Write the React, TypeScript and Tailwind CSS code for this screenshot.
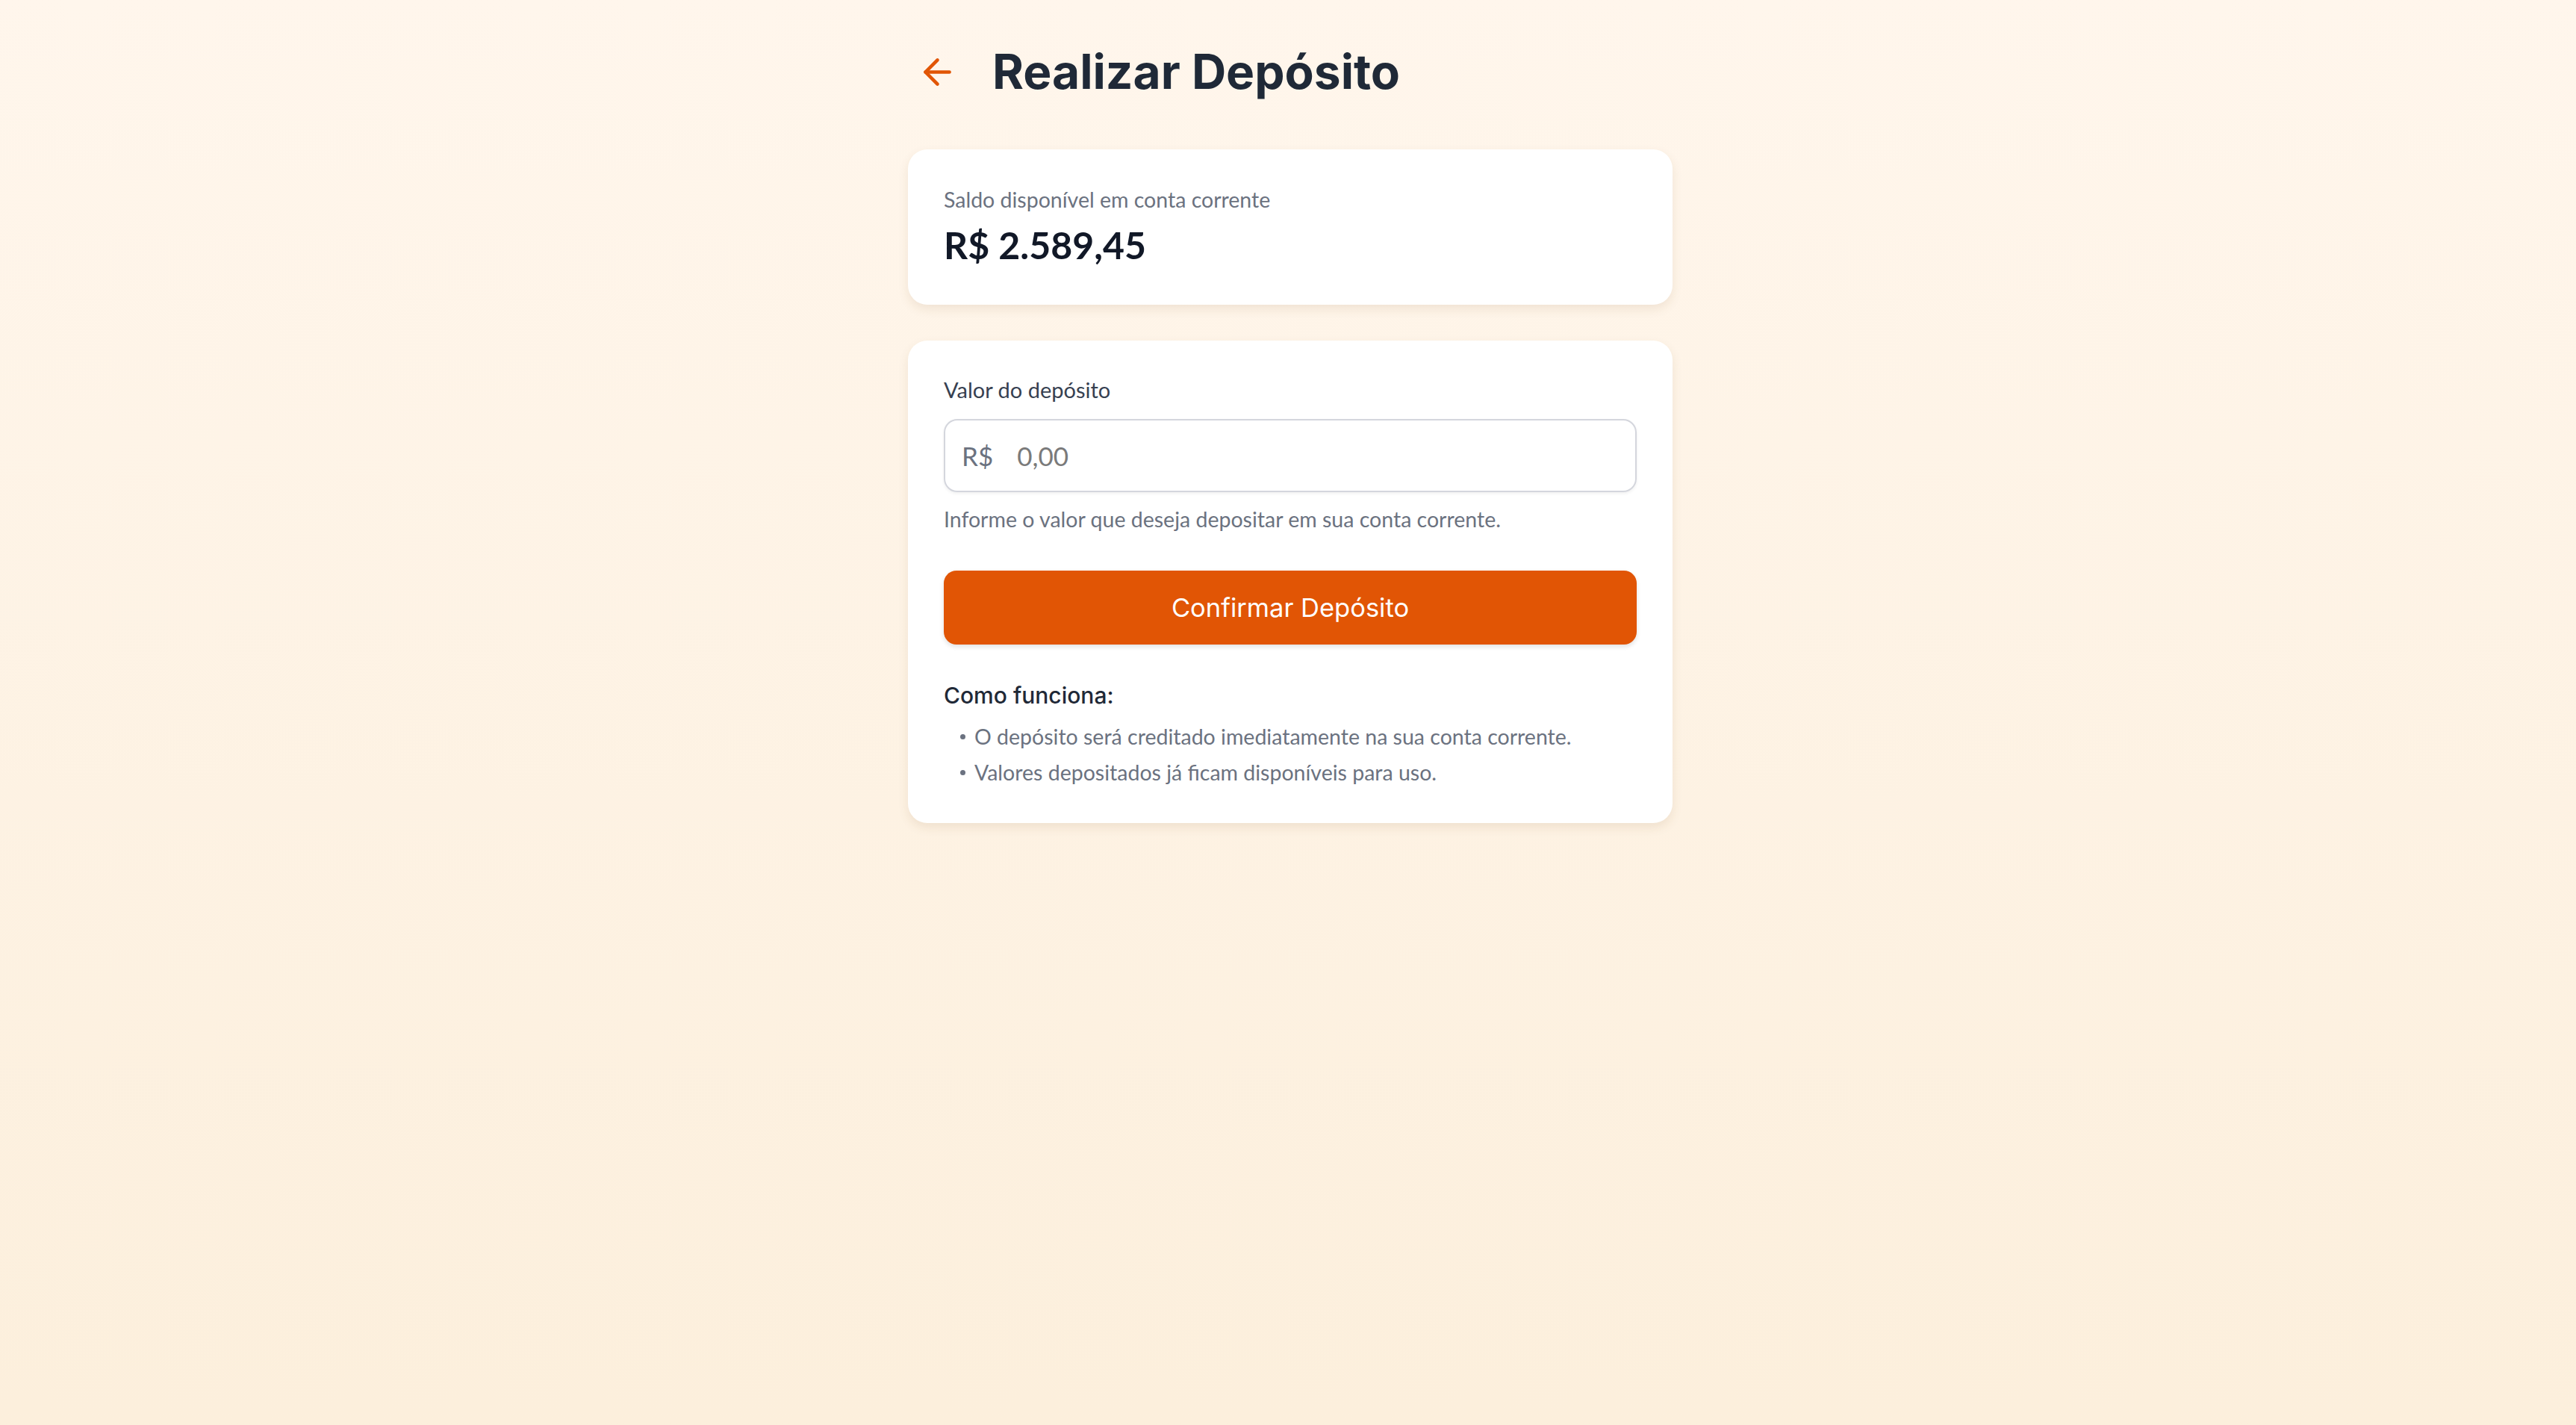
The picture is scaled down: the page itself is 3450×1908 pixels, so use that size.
import { ArrowLeft } from 'lucide-react'

const tips = [
  'O depósito será creditado imediatamente na sua conta corrente.',
  'Valores depositados já ficam disponíveis para uso.',
]

export default function App() {
  return (
    <div className="min-h-screen bg-gradient-to-b from-[#fff6ec] to-[#fcefdc] font-['Lato',sans-serif]">
      <div className="flex justify-center pl-[6px]">
        <div className="w-[1024px] pt-[40px]">
          {/* header */}
          <div className="flex h-[112px] items-center gap-[46px] pl-[12px]">
            <button className="flex items-center text-[#e15505]">
              <ArrowLeft size={55} strokeWidth={2} />
            </button>
            <h1 className="font-['Inter',sans-serif] text-[64px] font-bold leading-none text-[#1f2937]">
              Realizar Depósito
            </h1>
          </div>

          {/* saldo */}
          <div className="mt-[48px] rounded-[26px] bg-white px-[48px] pb-[45px] pt-[45px] shadow-[0_6px_14px_rgba(120,80,30,0.10)]">
            <p className="text-[28.5px] leading-[44px] text-[#6b7280]">Saldo disponível em conta corrente</p>
            <p className="mt-[4px] text-[50px] font-bold leading-[70px] text-[#111827]">R$ 2.589,45</p>
          </div>

          {/* form */}
          <div className="mt-[48px] rounded-[26px] bg-white px-[48px] pb-[46px] pt-[44px] shadow-[0_6px_14px_rgba(120,80,30,0.10)]">
            <label className="block text-[29px] leading-[44px] text-[#374151]">Valor do depósito</label>
            <div className="mt-[17px] flex h-[98px] items-center gap-[32px] rounded-[18px] border-2 border-[#d4d6dd] px-[22px] shadow-[0_2px_4px_rgba(0,0,0,0.06)]">
              <span className="text-[35px] text-[#6b7280]">R$</span>
              <input
                className="w-full bg-transparent text-[35px] text-[#374151] outline-none placeholder:text-[#7a7a7a]"
                placeholder="0,00"
              />
            </div>
            <p className="mt-[14px] text-[28.5px] leading-[44px] text-[#6b7280]">
              Informe o valor que deseja depositar em sua conta corrente.
            </p>

            <button className="mt-[47px] flex h-[99px] w-full items-center justify-center rounded-[17px] bg-[#e15505] font-['Inter',sans-serif] text-[34.5px] font-normal text-white shadow-[0_3px_6px_rgba(0,0,0,0.12)]">
              Confirmar Depósito
            </button>

            <h4 className="mt-[46px] font-['Inter',sans-serif] text-[30px] font-medium leading-[44px] text-[#1f2937]">
              Como funciona:
            </h4>
            <ul className="mt-[11px] space-y-[4px]">
              {tips.map((t, i) => (
                <li key={i} className="flex items-center gap-[12px] text-[28.5px] leading-[44px] text-[#6b7280]">
                  <span className="ml-[22px] h-[7px] w-[7px] rounded-full bg-[#6b7280]" />
                  <span>{t}</span>
                </li>
              ))}
            </ul>
          </div>
        </div>
      </div>
    </div>
  )
}
